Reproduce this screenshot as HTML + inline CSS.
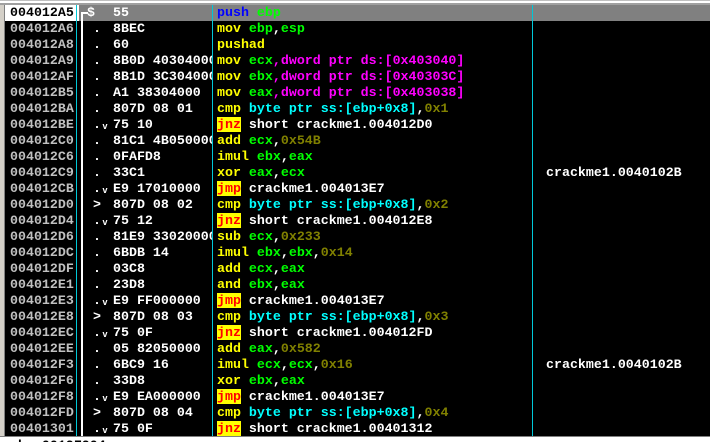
<!DOCTYPE html>
<html style="width:710px;height:442px;overflow:hidden;margin:0"><head><meta charset="utf-8"><style>
body{margin:0;width:710px;height:442px;overflow:hidden;background:#000;position:relative;font-family:"Liberation Mono",monospace;font-weight:bold;font-size:13.3px;}
.top{position:absolute;left:0;top:0;width:710px;height:5px;background:#fff;border-top:1px solid #c0c0c0;box-sizing:border-box;}
.top:after{content:"";position:absolute;left:0;top:2px;width:710px;height:2px;background:#a0a0a0;}
.lb{position:absolute;left:0;top:5px;width:4px;height:432px;background:#d4d0c8;border-right:1px solid #808080;}
.row{position:absolute;left:5px;width:705px;height:16px;line-height:16px;white-space:pre;}
.row span{position:absolute;top:0;}
.a{left:5px;color:#c0c0c0;}
.d{left:88px;color:#fff;}
.h{left:108px;color:#fff;width:99px;overflow:hidden;}
.m{left:212px;color:#ffff00;}
.c{left:541px;color:#fff;}
.g{color:#00ff00}.p{color:#ff00ff}.cy{color:#00ffff}.o{color:#808000}.w{color:#fff}.bl{color:#0000ff}
.j{background:#ffff00;color:#ff0000;}
.vl{position:absolute;top:5px;width:1px;height:432px;background:#00c8d8;}
.br{position:absolute;left:81px;top:12px;width:2px;height:425px;background:#fff;}
.bot{position:absolute;left:0;top:436px;width:710px;height:6px;background:#fff;border-top:1px solid #808080;overflow:hidden;}
.bot span{position:absolute;left:10px;top:1px;color:#000;line-height:16px;}
</style></head><body>
<div class="top"></div>
<div class="row" style="top:5px;background:#808080"><span class="a" style="left:0;width:69px;background:#fff;color:#000;padding-left:5px">004012A5</span><span class="d" style="left:82px">$</span><span class="h">55</span><span class="m bl">push <span class="g" style="position:static">ebp</span></span></div>
<div class="row" style="top:21px"><span class="a">004012A6</span><span class="d">.</span><span class="h">8BEC</span><span class="m">mov <b class="g">ebp</b><b class="w">,</b><b class="g">esp</b></span></div>
<div class="row" style="top:37px"><span class="a">004012A8</span><span class="d">.</span><span class="h">60</span><span class="m">pushad</span></div>
<div class="row" style="top:53px"><span class="a">004012A9</span><span class="d">.</span><span class="h">8B0D 40304000</span><span class="m">mov <b class="g">ecx</b><b class="p">,dword ptr ds:[0x403040]</b></span></div>
<div class="row" style="top:69px"><span class="a">004012AF</span><span class="d">.</span><span class="h">8B1D 3C304000</span><span class="m">mov <b class="g">ebx</b><b class="p">,dword ptr ds:[0x40303C]</b></span></div>
<div class="row" style="top:85px"><span class="a">004012B5</span><span class="d">.</span><span class="h">A1 38304000</span><span class="m">mov <b class="g">eax</b><b class="p">,dword ptr ds:[0x403038]</b></span></div>
<div class="row" style="top:101px"><span class="a">004012BA</span><span class="d">.</span><span class="h">807D 08 01</span><span class="m">cmp <b class="cy">byte ptr ss:[ebp+0x8]</b><b class="w">,</b><b class="o">0x1</b></span></div>
<div class="row" style="top:117px"><span class="a">004012BE</span><span class="d">.ᵥ</span><span class="h">75 10</span><span class="m"><b class="j">jnz</b><b class="w"> short crackme1.004012D0</b></span></div>
<div class="row" style="top:133px"><span class="a">004012C0</span><span class="d">.</span><span class="h">81C1 4B050000</span><span class="m">add <b class="g">ecx</b><b class="w">,</b><b class="o">0x54B</b></span></div>
<div class="row" style="top:149px"><span class="a">004012C6</span><span class="d">.</span><span class="h">0FAFD8</span><span class="m">imul <b class="g">ebx</b><b class="w">,</b><b class="g">eax</b></span></div>
<div class="row" style="top:165px"><span class="a">004012C9</span><span class="d">.</span><span class="h">33C1</span><span class="m">xor <b class="g">eax</b><b class="w">,</b><b class="g">ecx</b></span><span class="c">crackme1.0040102B</span></div>
<div class="row" style="top:181px"><span class="a">004012CB</span><span class="d">.ᵥ</span><span class="h">E9 17010000</span><span class="m"><b class="j">jmp</b><b class="w"> crackme1.004013E7</b></span></div>
<div class="row" style="top:197px"><span class="a">004012D0</span><span class="d">&gt;</span><span class="h">807D 08 02</span><span class="m">cmp <b class="cy">byte ptr ss:[ebp+0x8]</b><b class="w">,</b><b class="o">0x2</b></span></div>
<div class="row" style="top:213px"><span class="a">004012D4</span><span class="d">.ᵥ</span><span class="h">75 12</span><span class="m"><b class="j">jnz</b><b class="w"> short crackme1.004012E8</b></span></div>
<div class="row" style="top:229px"><span class="a">004012D6</span><span class="d">.</span><span class="h">81E9 33020000</span><span class="m">sub <b class="g">ecx</b><b class="w">,</b><b class="o">0x233</b></span></div>
<div class="row" style="top:245px"><span class="a">004012DC</span><span class="d">.</span><span class="h">6BDB 14</span><span class="m">imul <b class="g">ebx</b><b class="w">,</b><b class="g">ebx</b><b class="w">,</b><b class="o">0x14</b></span></div>
<div class="row" style="top:261px"><span class="a">004012DF</span><span class="d">.</span><span class="h">03C8</span><span class="m">add <b class="g">ecx</b><b class="w">,</b><b class="g">eax</b></span></div>
<div class="row" style="top:277px"><span class="a">004012E1</span><span class="d">.</span><span class="h">23D8</span><span class="m">and <b class="g">ebx</b><b class="w">,</b><b class="g">eax</b></span></div>
<div class="row" style="top:293px"><span class="a">004012E3</span><span class="d">.ᵥ</span><span class="h">E9 FF000000</span><span class="m"><b class="j">jmp</b><b class="w"> crackme1.004013E7</b></span></div>
<div class="row" style="top:309px"><span class="a">004012E8</span><span class="d">&gt;</span><span class="h">807D 08 03</span><span class="m">cmp <b class="cy">byte ptr ss:[ebp+0x8]</b><b class="w">,</b><b class="o">0x3</b></span></div>
<div class="row" style="top:325px"><span class="a">004012EC</span><span class="d">.ᵥ</span><span class="h">75 0F</span><span class="m"><b class="j">jnz</b><b class="w"> short crackme1.004012FD</b></span></div>
<div class="row" style="top:341px"><span class="a">004012EE</span><span class="d">.</span><span class="h">05 82050000</span><span class="m">add <b class="g">eax</b><b class="w">,</b><b class="o">0x582</b></span></div>
<div class="row" style="top:357px"><span class="a">004012F3</span><span class="d">.</span><span class="h">6BC9 16</span><span class="m">imul <b class="g">ecx</b><b class="w">,</b><b class="g">ecx</b><b class="w">,</b><b class="o">0x16</b></span><span class="c">crackme1.0040102B</span></div>
<div class="row" style="top:373px"><span class="a">004012F6</span><span class="d">.</span><span class="h">33D8</span><span class="m">xor <b class="g">ebx</b><b class="w">,</b><b class="g">eax</b></span></div>
<div class="row" style="top:389px"><span class="a">004012F8</span><span class="d">.ᵥ</span><span class="h">E9 EA000000</span><span class="m"><b class="j">jmp</b><b class="w"> crackme1.004013E7</b></span></div>
<div class="row" style="top:405px"><span class="a">004012FD</span><span class="d">&gt;</span><span class="h">807D 08 04</span><span class="m">cmp <b class="cy">byte ptr ss:[ebp+0x8]</b><b class="w">,</b><b class="o">0x4</b></span></div>
<div class="row" style="top:421px"><span class="a">00401301</span><span class="d">.ᵥ</span><span class="h">75 0F</span><span class="m"><b class="j">jnz</b><b class="w"> short crackme1.00401312</b></span></div>
<div class="lb"></div>
<div class="vl" style="left:76px"></div>
<div class="vl" style="left:212px"></div>
<div class="vl" style="left:532px"></div>
<div class="br"></div>
<div style="position:absolute;left:81px;top:12px;width:7px;height:2px;background:#fff"></div>
<div class="bot"><span>ebx=0019F904</span></div>
</body></html>
